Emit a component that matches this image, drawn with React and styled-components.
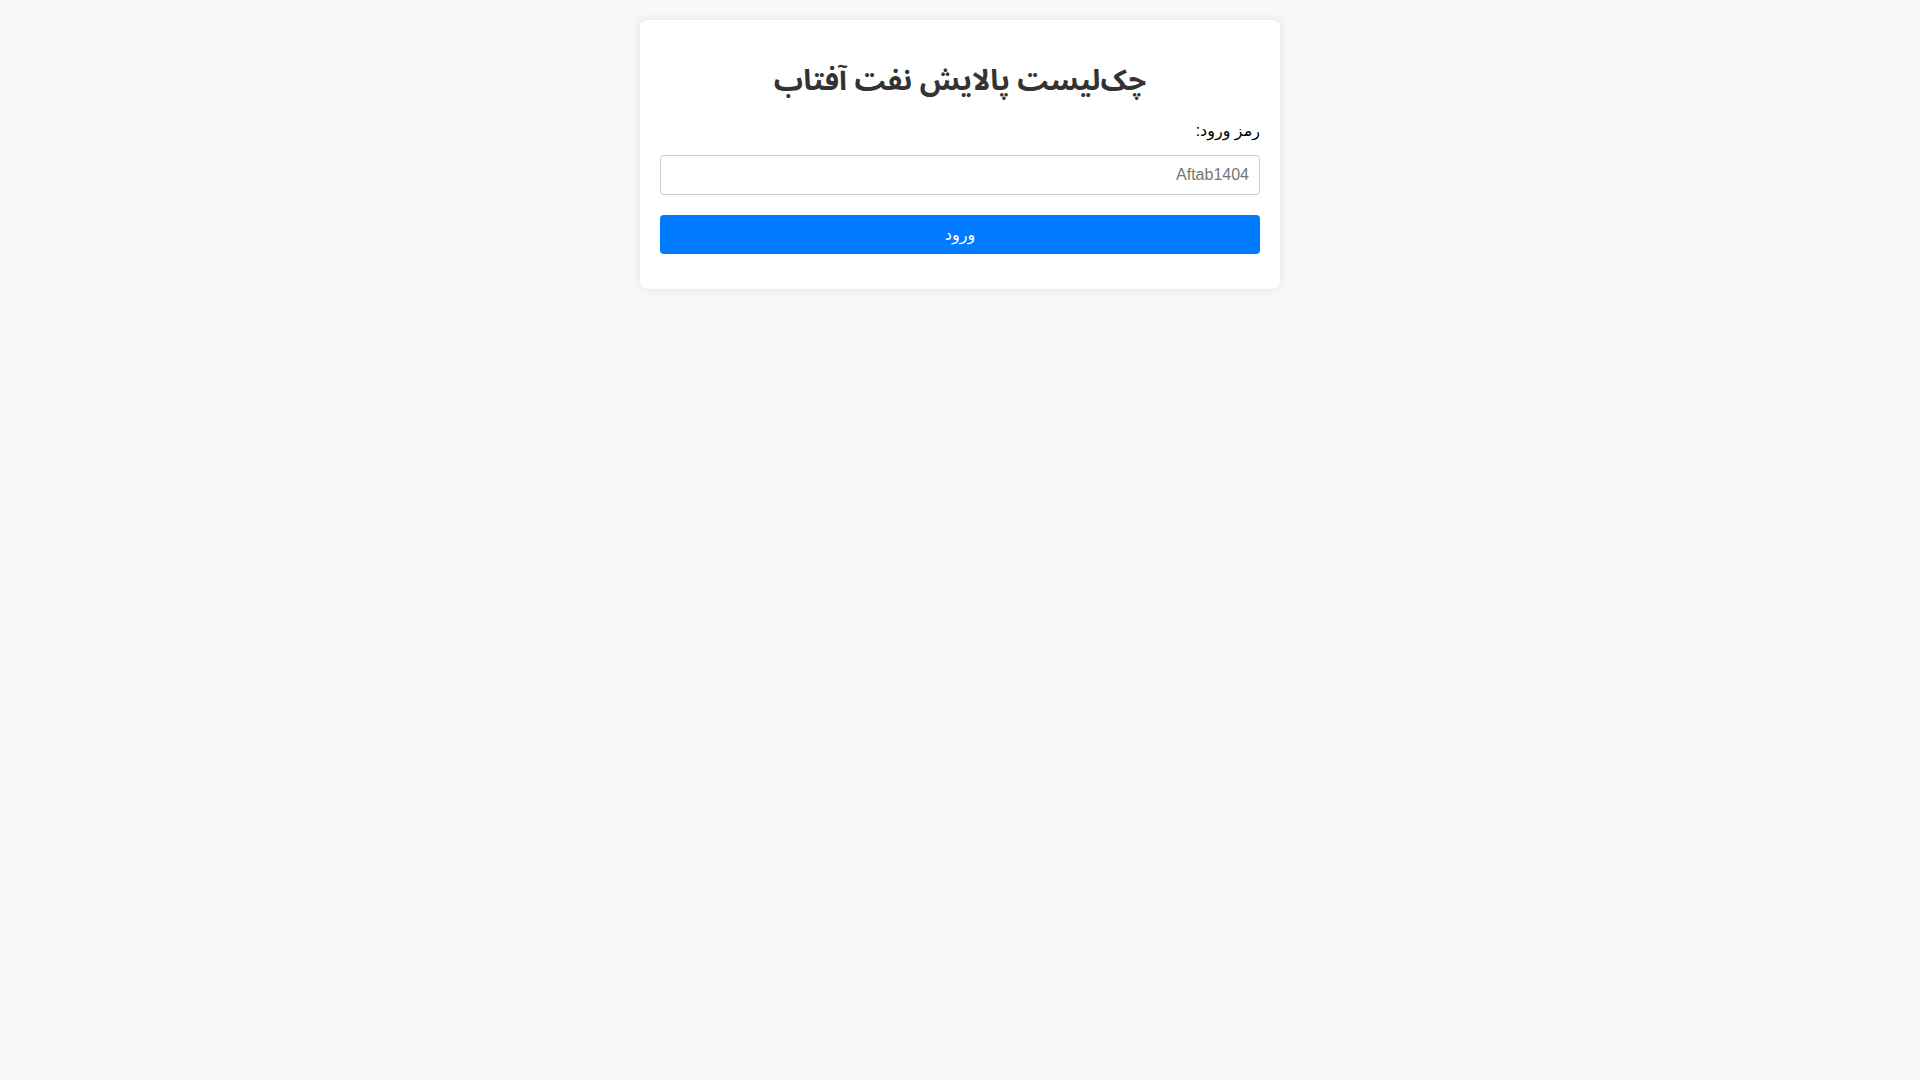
import React from "react";
import styled, { createGlobalStyle } from "styled-components";

const Global = createGlobalStyle`
  html, body { margin: 0; padding: 0; }
  body {
    background: #f8f8f8;
    font-family: Arial, "Liberation Sans", "DejaVu Sans", sans-serif;
    direction: rtl;
  }
`;

const Page = styled.div`
  padding: 20px;
`;

const Card = styled.div`
  width: 600px;
  margin: 0 auto;
  padding: 20px;
  background: #fff;
  border-radius: 8px;
  box-shadow: 0 0 10px rgba(0, 0, 0, 0.1);
`;

const Title = styled.h1`
  text-align: center;
  color: #333;
  font-family: "Noto Sans Arabic", "Noto Sans", sans-serif;
  font-size: 29px;
  margin: 10px 0;
`;

const Label = styled.label`
  display: block;
  font-size: 16px;
  color: #000;
  margin-bottom: 15px;
`;

const Input = styled.input`
  display: block;
  box-sizing: border-box;
  width: 100%;
  padding: 10px;
  margin: 10px 0;
  border: 1px solid #ccc;
  border-radius: 4px;
  font-size: 16px;
  font-family: Arial, "Liberation Sans", sans-serif;
  direction: rtl;
  &::placeholder { color: #757575; }
`;

const Button = styled.button`
  display: block;
  width: 100%;
  padding: 10px;
  margin-top: 20px;
  background: #007bff;
  color: #fff;
  border: none;
  border-radius: 4px;
  font-size: 16px;
  font-family: Arial, "Liberation Sans", "DejaVu Sans", sans-serif;
  cursor: pointer;
`;

const Spacer = styled.div`
  height: 15px;
`;

export default function App() {
  return (
    <>
      <Global />
      <Page>
        <Card>
          <Title>چک‌لیست پالایش نفت آفتاب</Title>
          <Label htmlFor="pw">رمز ورود:</Label>
          <Input id="pw" type="password" placeholder="Aftab1404" />
          <Button>ورود</Button>
          <Spacer />
        </Card>
      </Page>
    </>
  );
}
